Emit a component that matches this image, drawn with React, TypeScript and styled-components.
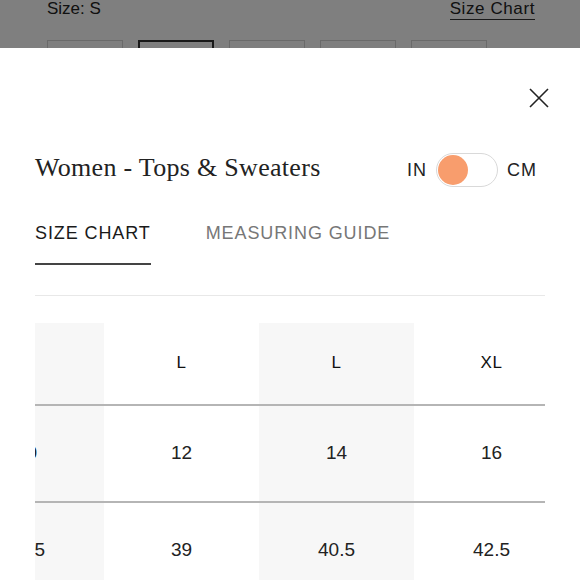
import React, { useLayoutEffect, useRef } from 'react'
import styled, { createGlobalStyle } from 'styled-components'

const sansFont = "'Liberation Sans', Arial, sans-serif"
const serifFont = "'Liberation Serif', 'Times New Roman', serif"

const GlobalStyle = createGlobalStyle`
  html, body {
    margin: 0;
    padding: 0;
    overflow: hidden;
    background: #fff;
    font-family: ${sansFont};
  }
`

const sizes = ['XS', 'S', 'M', 'L', 'XL']

const columns = [
  { label: 'M', values: ['10', '37.5'] },
  { label: 'L', values: ['12', '39'] },
  { label: 'L', values: ['14', '40.5'] },
  { label: 'XL', values: ['16', '42.5'] },
]

const CloseIcon = () => (
  <svg width="20" height="20" viewBox="0 0 20 20" fill="none">
    <path d="M1 1L19 19M19 1L1 19" stroke="#222" strokeWidth="1.6" />
  </svg>
)

const ProductPage = () => (
  <PageContainer>
    <SizeHeader>
      <SizeLabel>Size: S</SizeLabel>
      <SizeChartLink>Size Chart</SizeChartLink>
    </SizeHeader>
    <SizeOptions>
      {sizes.map((s) => (
        <SizeOption key={s} $selected={s === 'S'}>
          {s}
        </SizeOption>
      ))}
    </SizeOptions>
  </PageContainer>
)

const SizeTable = () => {
  const scrollRef = useRef<HTMLDivElement>(null)

  // the chart is scrolled sideways, first column partly hidden
  useLayoutEffect(() => {
    if (scrollRef.current) scrollRef.current.scrollLeft = 86
  }, [])

  return (
    <TableScroll ref={scrollRef}>
      <TableGrid>
        <TableRow $height={81}>
          {columns.map((col, i) => (
            <HeadCell key={i} $shaded={i % 2 === 0}>
              {col.label}
            </HeadCell>
          ))}
        </TableRow>
        {[0, 1].map((rowIndex) => (
          <TableRow key={rowIndex} $height={95}>
            {columns.map((col, i) => (
              <Cell key={i} $shaded={i % 2 === 0}>
                {col.values[rowIndex]}
              </Cell>
            ))}
          </TableRow>
        ))}
      </TableGrid>
    </TableScroll>
  )
}

export default function App() {
  return (
    <>
      <GlobalStyle />
      <ProductPage />
      <Overlay />
      <Sheet>
        <CloseRow>
          <CloseButton aria-label="Close">
            <CloseIcon />
          </CloseButton>
        </CloseRow>
        <TitleRow>
          <Title>Women - Tops &amp; Sweaters</Title>
          <UnitToggle>
            <UnitLabel>IN</UnitLabel>
            <Track>
              <Knob />
            </Track>
            <UnitLabel>CM</UnitLabel>
          </UnitToggle>
        </TitleRow>
        <Tabs>
          <Tab $active>SIZE CHART</Tab>
          <Tab>MEASURING GUIDE</Tab>
        </Tabs>
        <Divider />
        <SizeTable />
      </Sheet>
    </>
  )
}

const PageContainer = styled.div`
  padding: 0 45px 0 47px;
  height: 100vh;
  background: #fff;
`

const SizeHeader = styled.div`
  display: flex;
  justify-content: space-between;
  align-items: flex-start;
  margin-top: -1px;
`

const SizeLabel = styled.span`
  font-size: 17px;
  line-height: 20px;
  color: #222;
`

const SizeChartLink = styled.span`
  font-size: 17px;
  line-height: 20px;
  color: #222;
  letter-spacing: 0.6px;
  border-bottom: 1.5px solid #333;
`

const SizeOptions = styled.div`
  display: flex;
  gap: 15px;
  margin-top: 20px;
`

const SizeOption = styled.div<{ $selected?: boolean }>`
  width: 76px;
  height: 46px;
  box-sizing: border-box;
  border: ${(p) => (p.$selected ? '2px solid #333' : '1px solid #d4d4d4')};
  display: flex;
  align-items: center;
  justify-content: center;
  font-size: 15px;
  color: #222;
`

const Overlay = styled.div`
  position: fixed;
  inset: 0;
  background: rgba(0, 0, 0, 0.5);
`

const Sheet = styled.div`
  position: fixed;
  top: 48px;
  left: 0;
  right: 0;
  bottom: 0;
  background: #fff;
  padding: 40px 35px 0;
  display: flex;
  flex-direction: column;
`

const CloseRow = styled.div`
  display: flex;
  justify-content: flex-end;
  margin-right: -4px;
`

const CloseButton = styled.button`
  border: none;
  background: none;
  padding: 0;
  width: 20px;
  height: 20px;
  display: flex;
  cursor: pointer;
`

const TitleRow = styled.div`
  display: flex;
  justify-content: space-between;
  align-items: center;
  margin-top: 45px;
  height: 34px;
`

const Title = styled.h2`
  margin: 0 0 4px;
  font-family: ${serifFont};
  font-weight: 400;
  font-size: 26px;
  color: #222;
  letter-spacing: 0.3px;
`

const UnitToggle = styled.div`
  display: flex;
  align-items: center;
  gap: 9px;
  margin-right: 8px;
`

const UnitLabel = styled.span`
  font-size: 18px;
  letter-spacing: 1px;
  color: #222;
`

const Track = styled.div`
  width: 62px;
  height: 34px;
  box-sizing: border-box;
  border: 1.5px solid #d9d9d9;
  border-radius: 17px;
  background: #fff;
  display: flex;
  align-items: center;
  padding-left: 1px;
`

const Knob = styled.div`
  width: 30px;
  height: 30px;
  border-radius: 50%;
  background: #f89d6d;
`

const Tabs = styled.div`
  display: flex;
  gap: 55px;
  margin-top: 36px;
`

const Tab = styled.div<{ $active?: boolean }>`
  font-size: 18px;
  line-height: 20px;
  letter-spacing: 0.9px;
  color: ${(p) => (p.$active ? '#1a1a1a' : '#777')};
  padding-bottom: 20px;
  border-bottom: 2px solid ${(p) => (p.$active ? '#444' : 'transparent')};
`

const Divider = styled.div`
  height: 1px;
  background: #e8e8e8;
  margin-top: 30px;
`

const TableScroll = styled.div`
  margin-top: 27px;
  overflow-x: auto;
  scrollbar-width: none;
  &::-webkit-scrollbar {
    display: none;
  }
`

const TableGrid = styled.div`
  width: 620px;
`

const TableRow = styled.div<{ $height: number }>`
  display: grid;
  grid-template-columns: repeat(4, 155px);
  height: ${(p) => p.$height}px;
  border-bottom: 2px solid #b5b5b5;
`

const Cell = styled.div<{ $shaded?: boolean }>`
  display: flex;
  align-items: center;
  justify-content: center;
  background: ${(p) => (p.$shaded ? '#f7f7f7' : '#fff')};
  font-size: 19px;
  color: #222;
`

const HeadCell = styled(Cell)`
  font-size: 17px;
  font-weight: 500;
  letter-spacing: 0.5px;
  color: #111;
`
